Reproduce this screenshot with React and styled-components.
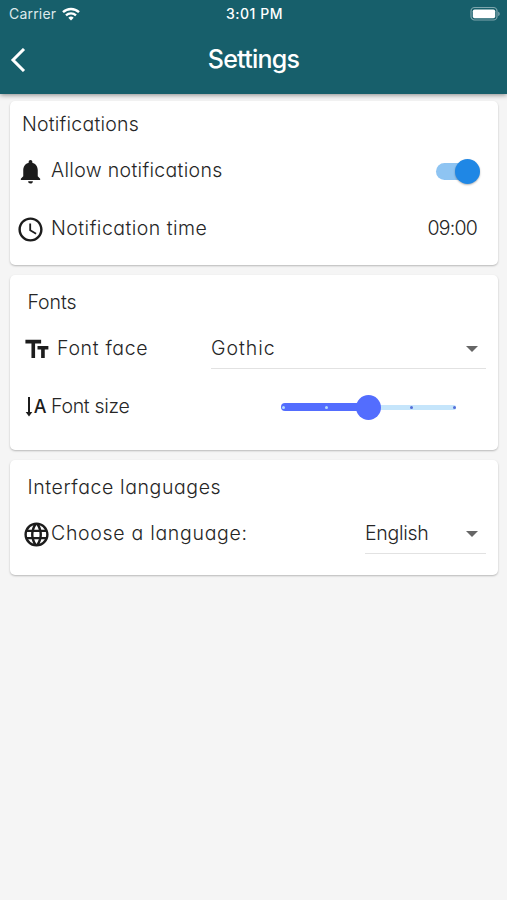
import React from "react"
import styled, { createGlobalStyle } from "styled-components"
import {
  MdAccessTime,
  MdFormatSize,
  MdLanguage,
  MdNotifications,
} from "react-icons/md"

const GlobalStyle = createGlobalStyle`
  * {
    box-sizing: border-box;
  }

  body {
    margin: 0;
    background: #f5f5f5;
    color: #262626;
    font-family: Inter, "Liberation Sans", sans-serif;
    font-feature-settings: "cv11";
  }
`

const PageStyles = styled.div`
  min-height: 900px;
  background: #f5f5f5;
`

const HeaderStyles = styled.header`
  height: 94px;
  background: #175f6b;
  color: #fff;
  box-shadow: 0 1px 5px rgba(0, 0, 0, 0.45);
`

const StatusBarStyles = styled.div`
  display: grid;
  grid-template-columns: 1fr auto 1fr;
  align-items: center;
  height: 27px;
  padding: 0 7px 0 9px;
  font-size: 14px;
  font-feature-settings: normal;
`

const CarrierStyles = styled.div`
  display: flex;
  align-items: center;
  gap: 6px;
  color: #dde9eb;
  letter-spacing: 0.2px;
`

const ClockStyles = styled.div`
  font-weight: 500;
  letter-spacing: 0.5px;
`

const BatteryStyles = styled.svg`
  justify-self: end;
`

const TitleBarStyles = styled.div`
  display: grid;
  grid-template-columns: 40px 1fr 40px;
  align-items: center;
  height: 64px;
`

const BackButtonStyles = styled.button`
  display: flex;
  padding: 1px 0 0 10px;
  border: 0;
  background: none;
  color: #fff;
`

const TitleStyles = styled.h1`
  margin: 0;
  font-size: 25px;
  font-weight: 500;
  line-height: 30px;
  text-align: center;
  letter-spacing: ${({ $spacing }) => $spacing}px;
`

const CardListStyles = styled.main`
  display: flex;
  flex-direction: column;
  gap: 10px;
  padding: 7px 9px 0 10px;
`

const CardStyles = styled.section`
  padding: ${({ $padding }) => $padding};
  border-radius: 5px;
  background: #fff;
  box-shadow: 0 1px 2px rgba(0, 0, 0, 0.25);
`

const HeadingStyles = styled.h2`
  height: 37px;
  margin: 0;
  padding-left: ${({ $indent }) => $indent}px;
  font-size: 19.5px;
  font-weight: 300;
  line-height: 39px;
  letter-spacing: ${({ $spacing }) => $spacing}px;
`

const RowStyles = styled.div`
  display: flex;
  align-items: center;
  height: 58px;
  padding-left: ${({ $indent }) => $indent}px;
`

const IconStyles = styled.span`
  display: flex;
  width: ${({ $width }) => $width}px;
  color: #1c1c1c;
`

const FlippedStyles = styled.span`
  display: flex;
  transform: scaleX(-1);
`

const LabelStyles = styled.span`
  flex: 1;
  font-size: 19.5px;
  font-weight: 300;
  line-height: 26px;
  white-space: nowrap;
  letter-spacing: ${({ $spacing }) => $spacing}px;
  padding-bottom: 2px;
`

const ValueStyles = styled.span`
  margin-right: 21px;
  font-size: 19.5px;
  font-weight: 300;
  line-height: 26px;
  letter-spacing: ${({ $spacing }) => $spacing}px;
  padding-bottom: 2px;
`

const SwitchStyles = styled.span`
  display: flex;
  align-items: center;
  justify-content: flex-end;
  width: 40px;
  height: 17px;
  margin-right: 22px;
  border-radius: 9px;
  background: #8ec4f2;
`

const SwitchThumbStyles = styled.span`
  flex: none;
  width: 25px;
  height: 25px;
  margin-right: -4px;
  border-radius: 50%;
  background: #1f87e5;
  box-shadow: 0 1px 2px rgba(0, 0, 0, 0.3);
`

const SelectStyles = styled.div`
  display: flex;
  align-items: center;
  justify-content: space-between;
  width: ${({ $width }) => $width}px;
  height: 40px;
  margin-right: 12px;
  padding: 0 8px 1px 0;
  border-bottom: 1px solid #e2e2e2;
  font-size: 19.5px;
  font-weight: 300;
  letter-spacing: ${({ $spacing }) => $spacing}px;
`

const ArrowStyles = styled.span`
  margin-top: 2px;
  border-top: 6px solid #666;
  border-right: 6px solid transparent;
  border-left: 6px solid transparent;
`

const SliderStyles = styled.div`
  position: relative;
  display: flex;
  align-items: center;
  width: 175px;
  height: 25px;
  margin-right: 42px;
`

const TrackStyles = styled.span`
  width: ${({ $active }) => ($active ? 88 : 87)}px;
  height: ${({ $active }) => ($active ? 8 : 5)}px;
  border-radius: ${({ $active }) => ($active ? "4px 0 0 4px" : "0 2px 2px 0")};
  background: ${({ $active }) => ($active ? "#536dfe" : "#c5e5fb")};
`

const TickStyles = styled.span`
  position: absolute;
  top: 11px;
  width: 3px;
  height: 3px;
  border-radius: 50%;
  background: ${({ $active }) => ($active ? "#b5dcfb" : "#536dd8")};
`

const SliderThumbStyles = styled.span`
  position: absolute;
  top: 0;
  left: 75px;
  width: 25px;
  height: 25px;
  border-radius: 50%;
  background: #536dfe;
`

const ticks = [1, 43.5, 129, 172]

function WifiIcon() {
  return (
    <svg width="18" height="14" viewBox="0 0 18 14" fill="none">
      <path d="M1 5.2a11.5 11.5 0 0 1 16 0" stroke="#fff" strokeWidth="2.4" />
      <path d="M4 8.3a7.2 7.2 0 0 1 10 0" stroke="#fff" strokeWidth="2.3" />
      <path d="M6.3 10.8a3.9 3.9 0 0 1 5.4 0L9 13.6z" fill="#fff" />
    </svg>
  )
}

function BatteryIcon() {
  return (
    <BatteryStyles width="31" height="16" viewBox="0 0 31 16">
      <rect
        x="2"
        y="1.5"
        width="26"
        height="12.5"
        rx="3.6"
        fill="none"
        stroke="#7ea6ad"
        strokeWidth="1.2"
      />
      <rect x="3.8" y="3.4" width="22.4" height="8.8" rx="1.8" fill="#fff" />
      <path d="M29.2 5.8c2 .7 2 3.5 0 4.2z" fill="#7ea6ad" />
    </BatteryStyles>
  )
}

function BackIcon() {
  return (
    <svg width="16" height="24" viewBox="0 0 16 24" fill="none">
      <path d="M14 1 3 12l11 11" stroke="#fff" strokeWidth="3" />
    </svg>
  )
}

function TextHeightIcon() {
  return (
    <svg width="26" height="24" viewBox="0 0 26 24">
      <path d="M4 2v17" stroke="#1c1c1c" strokeWidth="2" />
      <path d="M.7 17h6.6L4 21.4z" fill="#1c1c1c" />
      <text x="8.8" y="17.8" fontSize="18" fontWeight="450" fill="#1c1c1c">
        A
      </text>
    </svg>
  )
}

export default function App() {
  return (
    <PageStyles>
      <GlobalStyle />
      <HeaderStyles>
        <StatusBarStyles>
          <CarrierStyles>
            Carrier
            <WifiIcon />
          </CarrierStyles>
          <ClockStyles>3:01 PM</ClockStyles>
          <BatteryIcon />
        </StatusBarStyles>
        <TitleBarStyles>
          <BackButtonStyles aria-label="Back">
            <BackIcon />
          </BackButtonStyles>
          <TitleStyles $spacing={-0.75}>Settings</TitleStyles>
        </TitleBarStyles>
      </HeaderStyles>
      <CardListStyles>
        <CardStyles $padding="4px 0 7px">
          <HeadingStyles $indent={12} $spacing={0.22}>
            Notifications
          </HeadingStyles>
          <RowStyles $indent={6}>
            <IconStyles $width={35}>
              <MdNotifications size={29} />
            </IconStyles>
            <LabelStyles $spacing={0.32}>Allow notifications</LabelStyles>
            <SwitchStyles role="switch" aria-checked="true">
              <SwitchThumbStyles />
            </SwitchStyles>
          </RowStyles>
          <RowStyles $indent={6}>
            <IconStyles $width={35}>
              <MdAccessTime size={29} />
            </IconStyles>
            <LabelStyles $spacing={0.48}>Notification time</LabelStyles>
            <ValueStyles $spacing={-0.75}>09:00</ValueStyles>
          </RowStyles>
        </CardStyles>
        <CardStyles $padding="8px 0 14px">
          <HeadingStyles $indent={17.5} $spacing={-0.1}>
            Fonts
          </HeadingStyles>
          <RowStyles $indent={12.5}>
            <IconStyles $width={34.5}>
              <FlippedStyles>
                <MdFormatSize size={29} />
              </FlippedStyles>
            </IconStyles>
            <LabelStyles $spacing={0.68}>Font face</LabelStyles>
            <SelectStyles $width={275} $spacing={0.95}>
              Gothic
              <ArrowStyles />
            </SelectStyles>
          </RowStyles>
          <RowStyles $indent={15}>
            <IconStyles $width={26}>
              <TextHeightIcon />
            </IconStyles>
            <LabelStyles $spacing={-0.3}>Font size</LabelStyles>
            <SliderStyles>
              <TrackStyles $active />
              <TrackStyles />
              {ticks.map(left => (
                <TickStyles key={left} $active={left < 88} style={{ left }} />
              ))}
              <SliderThumbStyles />
            </SliderStyles>
          </RowStyles>
        </CardStyles>
        <CardStyles $padding="8px 0 12px">
          <HeadingStyles $indent={17.5} $spacing={0.6}>
            Interface languages
          </HeadingStyles>
          <RowStyles $indent={12}>
            <IconStyles $width={29}>
              <MdLanguage size={29} />
            </IconStyles>
            <LabelStyles $spacing={0.7}>Choose a language:</LabelStyles>
            <SelectStyles $width={121} $spacing={-0.3}>
              English
              <ArrowStyles />
            </SelectStyles>
          </RowStyles>
        </CardStyles>
      </CardListStyles>
    </PageStyles>
  )
}
